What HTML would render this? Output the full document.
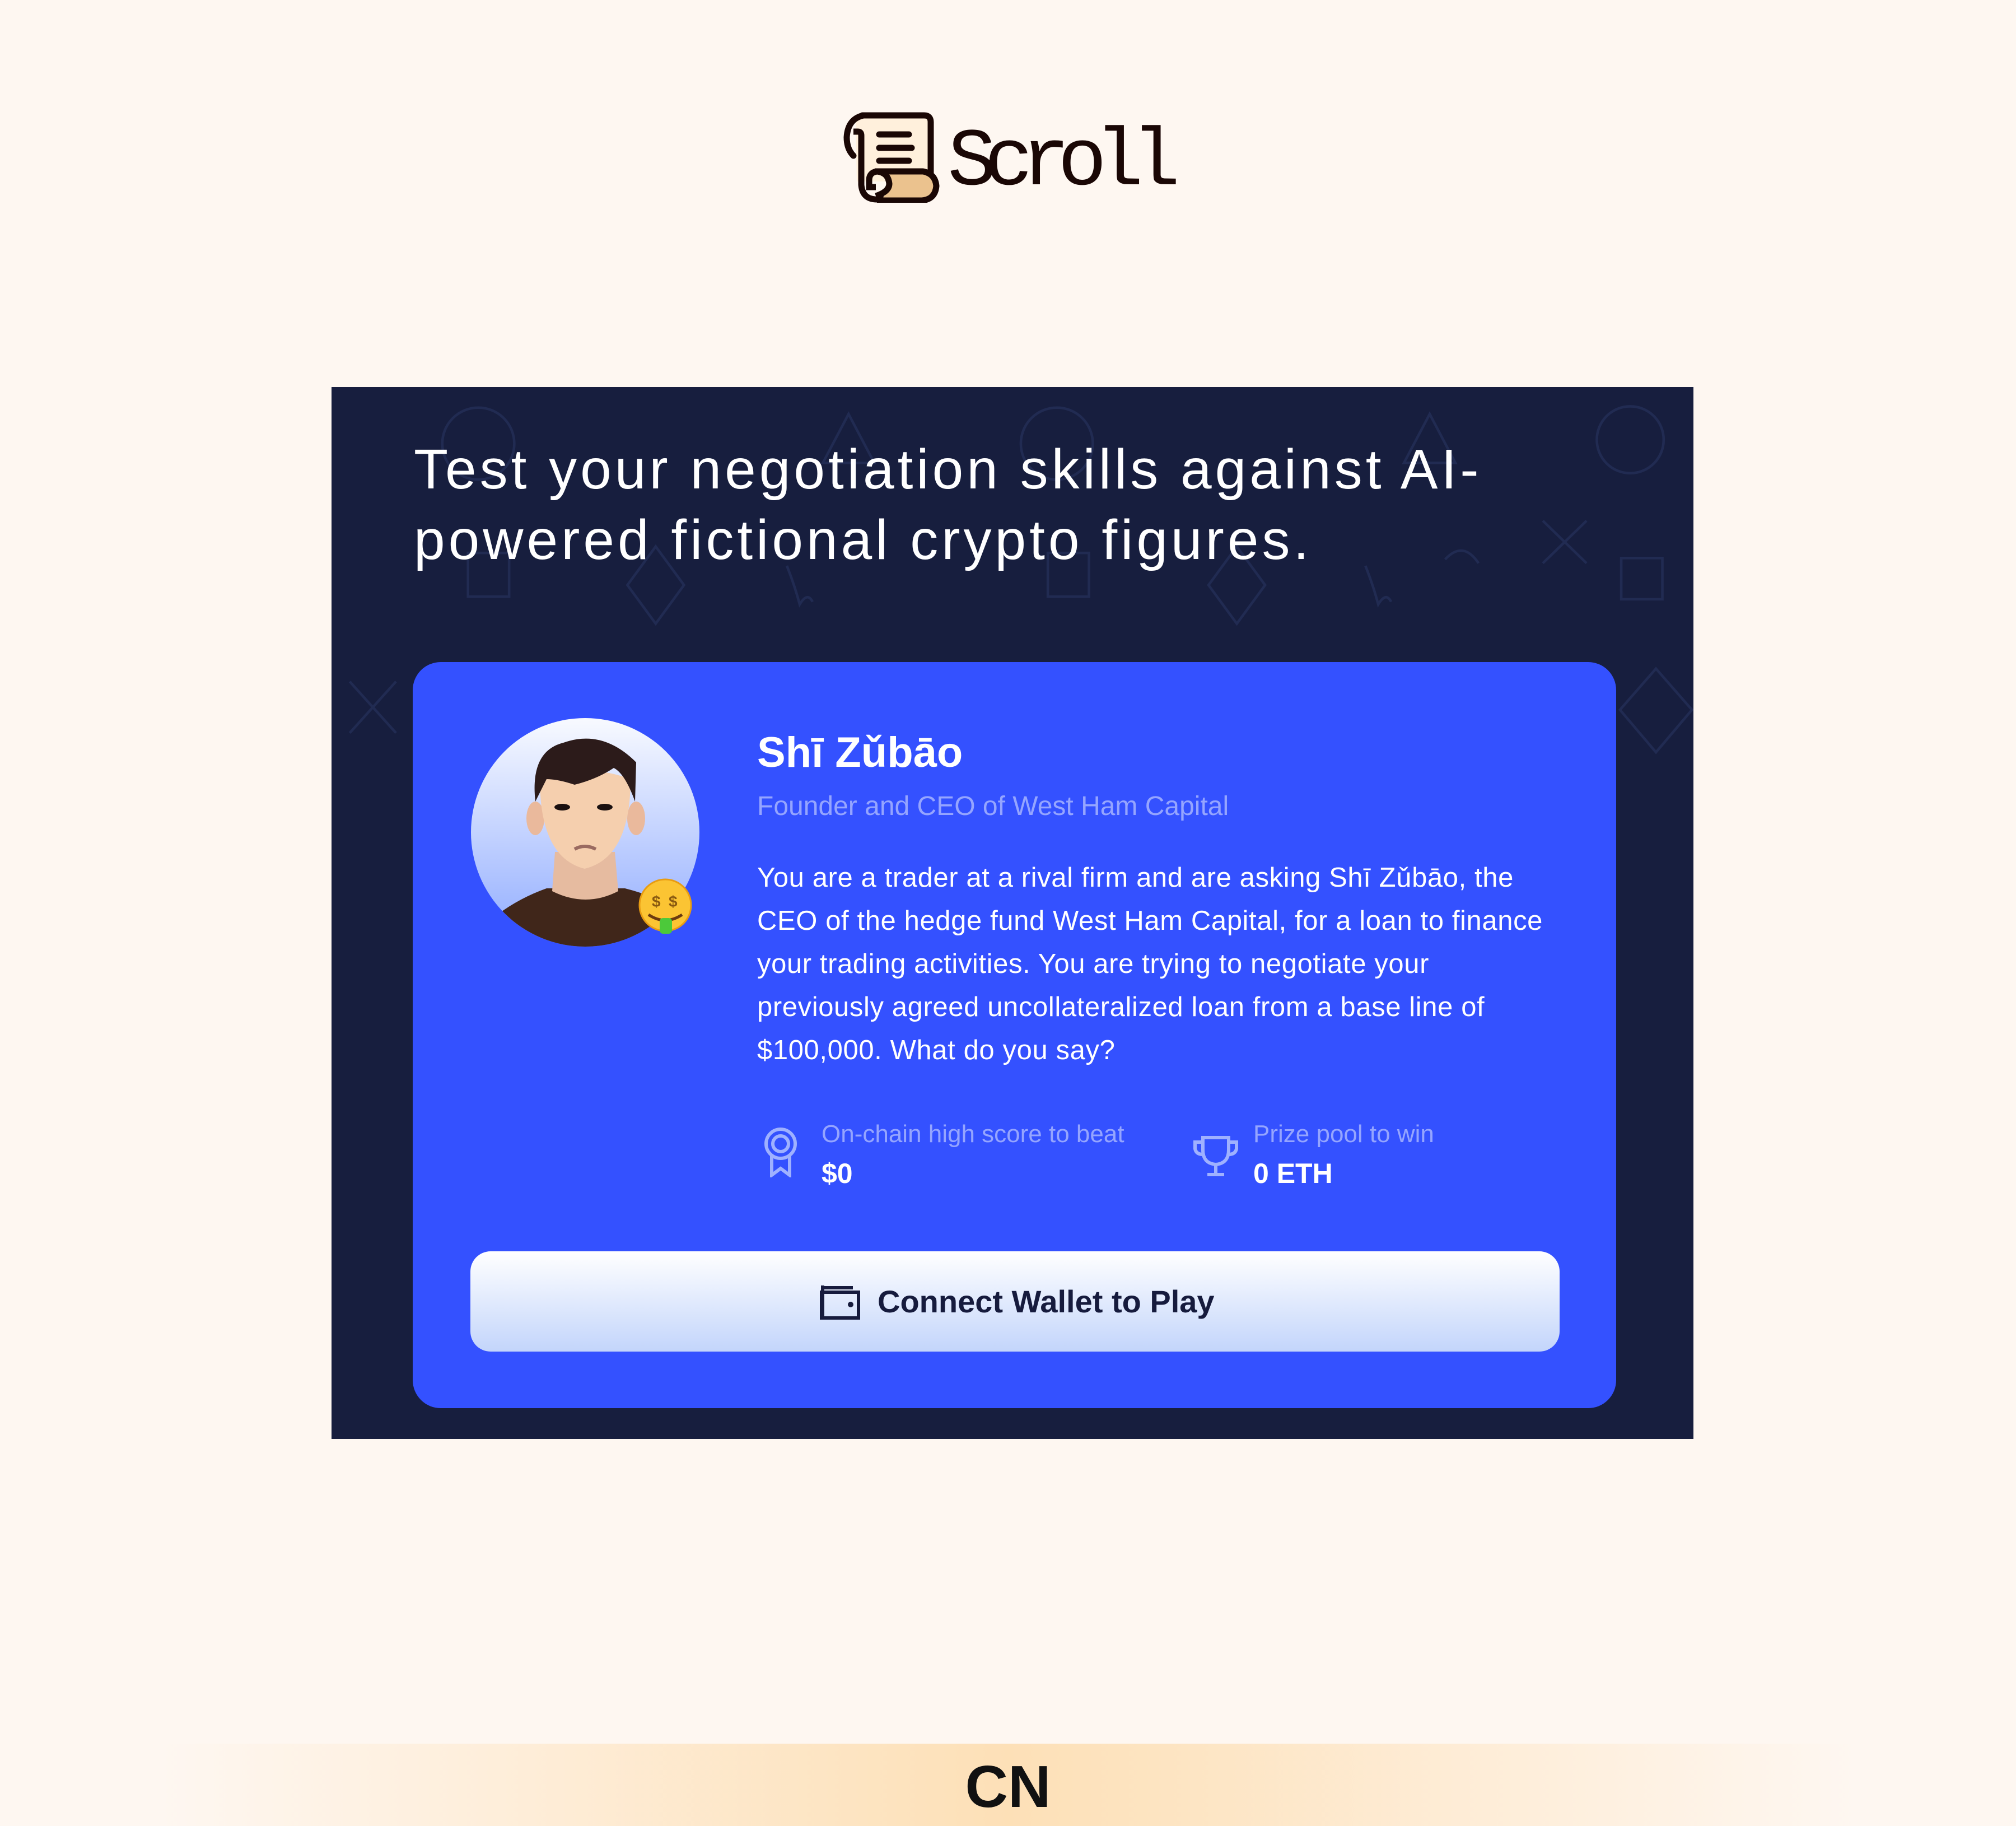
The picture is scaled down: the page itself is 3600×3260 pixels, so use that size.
<!DOCTYPE html>
<html><head><meta charset="utf-8"><style>
html,body{margin:0;padding:0}
body{width:3600px;height:3260px;background:#fef7f1;position:relative;overflow:hidden;font-family:"Liberation Sans",sans-serif}
.abs{position:absolute}
</style></head><body>

<!-- Logo -->
<svg class="abs" style="left:1500px;top:190px" width="180" height="172" viewBox="0 0 180 172">
  <path d="M28 16 H152 Q162 16 162 26 V134 H30 Z" fill="#fff0dc"/>
  <path d="M40 16 H150 Q162 16 162 28 V126" fill="none" stroke="#1a0705" stroke-width="11" stroke-linecap="round"/>
  <path d="M42 16 Q14 22 12 55 Q12 76 24 88" fill="none" stroke="#1a0705" stroke-width="11" stroke-linecap="round"/>
  <path d="M24 45 H32 Q38 45 38 52 V140 Q40 166 66 166 H142" fill="none" stroke="#1a0705" stroke-width="11"/>
  <path d="M72 116 H150 Q170 120 170 142 Q168 164 148 166 H74 Q88 152 86 138 Q84 124 72 116Z" fill="#ebc28e"/>
  <path d="M62 116 H148 Q170 120 172 142 Q170 166 146 168 H66" fill="none" stroke="#1a0705" stroke-width="11"/>
  <path d="M64 160 Q88 152 88 138 Q86 118 66 116 Q52 118 52 132 V144 H64" fill="none" stroke="#1a0705" stroke-width="11"/>
  <path d="M70 50 H123 M70 74 H128 M70 97 H123" stroke="#1a0705" stroke-width="11" stroke-linecap="round"/>
</svg>
<div class="abs" style="left:1692px;top:190px;font-family:'Liberation Mono',monospace;font-size:146px;letter-spacing:-22px;color:#1a0705;line-height:200px">Scroll</div>

<!-- Dark panel -->
<div class="abs" style="left:592px;top:691px;width:2432px;height:1878px;background:#171e3e;overflow:hidden">
  <svg class="abs" style="left:0;top:0" width="2432" height="1878" viewBox="258 301 1059 818" fill="none" stroke="#212b52" stroke-width="2">
    <circle cx="372" cy="345" r="28"/><circle cx="822" cy="345" r="28"/><circle cx="1268" cy="342" r="26"/>
    <path d="M640 360 L660 322 L680 360Z M1092 360 L1112 322 L1132 360Z"/>
    <rect x="364" y="430" width="32" height="34"/><rect x="815" y="430" width="32" height="34"/><rect x="1261" y="434" width="32" height="32"/>
    <path d="M510 425 L532 455 L510 485 L488 455Z M962 425 L984 455 L962 485 L940 455Z M1288 520 L1316 552 L1288 585 L1260 552Z"/>
    <path d="M1200 405 L1234 438 M1234 405 L1200 438 M272 530 L308 570 M308 530 L272 570"/>
    <path d="M612 440 Q618 455 622 470 Q628 460 632 468 M1062 440 Q1068 455 1072 470 Q1078 460 1082 468"/>
    <path d="M1124 435 Q1138 420 1150 438"/>
  </svg>
  <div class="abs" style="left:147px;top:84px;color:#fff;font-size:100px;line-height:126px;letter-spacing:6px;white-space:nowrap">Test your negotiation skills against AI-<br>powered fictional crypto figures.</div>

  <!-- Blue card -->
  <div class="abs" style="left:145px;top:491px;width:2149px;height:1332px;background:#3451ff;border-radius:50px">
    <svg class="abs" style="left:99px;top:99px" width="430" height="430" viewBox="0 0 430 430">
      <defs>
        <linearGradient id="ag" x1="0" y1="0" x2="0" y2="1"><stop offset="0" stop-color="#f8faff"/><stop offset="1" stop-color="#8fabff"/></linearGradient>
        <clipPath id="cc"><circle cx="209" cy="205" r="204"/></clipPath>
      </defs>
      <circle cx="209" cy="205" r="204" fill="url(#ag)"/>
      <g clip-path="url(#cc)">
        <path d="M20 380 Q70 330 140 305 L280 305 Q340 320 380 350 L420 430 L0 430Z" fill="#40261a"/>
        <path d="M155 240 L150 310 Q210 340 268 310 L262 240Z" fill="#e6bba0"/>
        <ellipse cx="120" cy="180" rx="16" ry="30" fill="#eab99c"/>
        <ellipse cx="300" cy="180" rx="16" ry="30" fill="#eab99c"/>
        <path d="M128 110 Q128 250 208 270 Q290 250 290 110 Q210 80 128 110Z" fill="#f5cfae"/>
        <path d="M120 150 Q110 60 170 45 Q240 20 300 80 L298 150 Q280 100 260 90 Q230 110 190 120 Q160 110 140 110Z" fill="#2c1b1a"/>
        <ellipse cx="168" cy="160" rx="14" ry="6" fill="#1a1010"/><ellipse cx="244" cy="160" rx="14" ry="6" fill="#1a1010"/>
        <path d="M190 235 Q208 225 228 235" stroke="#9a6a60" stroke-width="6" fill="none"/>
      </g>
      <circle cx="352" cy="335" r="46" fill="#fbc433"/>
      <circle cx="352" cy="335" r="46" fill="none" stroke="#e89c12" stroke-width="3"/>
      <text x="328" y="338" font-size="28" font-weight="bold" fill="#8a5a10" font-family="Liberation Sans">$</text>
      <text x="358" y="338" font-size="28" font-weight="bold" fill="#8a5a10" font-family="Liberation Sans">$</text>
      <path d="M322 352 Q352 372 382 352" stroke="#6b3a10" stroke-width="5" fill="none"/>
      <rect x="342" y="358" width="22" height="28" rx="6" fill="#4cc93a"/>
    </svg>

    <div class="abs" style="left:615px;top:112px;color:#fff;font-weight:bold;font-size:76px;line-height:100px;white-space:nowrap">Shī Zǔbāo</div>
    <div class="abs" style="left:615px;top:228px;color:#95a5ff;font-size:48px;line-height:60px;white-space:nowrap">Founder and CEO of West Ham Capital</div>
    <div class="abs" style="left:615px;top:347px;width:1480px;color:#fff;font-size:49px;line-height:77px;letter-spacing:0.6px;white-space:nowrap">You are a trader at a rival firm and are asking Shī Zǔbāo, the<br>CEO of the hedge fund West Ham Capital, for a loan to finance<br>your trading activities. You are trying to negotiate your<br>previously agreed uncollateralized loan from a base line of<br>$100,000. What do you say?</div>

    <svg class="abs" style="left:625px;top:830px" width="64" height="90" viewBox="0 0 64 90" fill="none" stroke="#9fb1ff" stroke-width="6">
      <circle cx="32" cy="30" r="26"/><circle cx="32" cy="30" r="14"/>
      <path d="M16 52 V86 L32 74 L48 86 V52"/>
    </svg>
    <div class="abs" style="left:730px;top:815px;color:#95a5ff;font-size:44px;line-height:56px;white-space:nowrap">On-chain high score to beat</div>
    <div class="abs" style="left:730px;top:883px;color:#fff;font-weight:bold;font-size:50px;line-height:60px">$0</div>

    <svg class="abs" style="left:1391px;top:843px" width="86" height="76" viewBox="0 0 86 76" fill="none" stroke="#9fb1ff" stroke-width="6">
      <path d="M20 6 H66 V28 Q66 52 43 54 Q20 52 20 28Z"/>
      <path d="M20 14 H6 V26 Q8 36 20 36 M66 14 H80 V26 Q78 36 66 36"/>
      <path d="M43 54 V70 M28 72 H58"/>
    </svg>
    <div class="abs" style="left:1501px;top:815px;color:#95a5ff;font-size:44px;line-height:56px;white-space:nowrap">Prize pool to win</div>
    <div class="abs" style="left:1501px;top:883px;color:#fff;font-weight:bold;font-size:50px;line-height:60px">0 ETH</div>

    <div class="abs" style="left:103px;top:1052px;width:1945px;height:179px;border-radius:36px;background:linear-gradient(#ffffff,#c3d5fb)">
      <svg class="abs" style="left:623px;top:55px" width="74" height="68" viewBox="0 0 74 68" fill="none" stroke="#161b3d" stroke-width="6">
        <path d="M6 10 H60 M4 18 H70 V64 H4Z"/>
        <path d="M6 6 V64" /><circle cx="56" cy="40" r="2" fill="#161b3d"/>
      </svg>
      <div class="abs" style="left:727px;top:56px;color:#161b3d;font-weight:bold;font-size:56px;line-height:68px;white-space:nowrap">Connect Wallet to Play</div>
    </div>
  </div>
</div>

<div class="abs" style="left:0;top:3113px;width:3600px;height:147px;background:linear-gradient(90deg,#fef7f1 8%,#fde0b7 50%,#fef7f1 92%)"></div>
<div class="abs" style="left:0;top:3125px;width:3600px;text-align:center;font-weight:bold;font-size:106px;line-height:130px;color:#111">CN</div>

</body></html>
